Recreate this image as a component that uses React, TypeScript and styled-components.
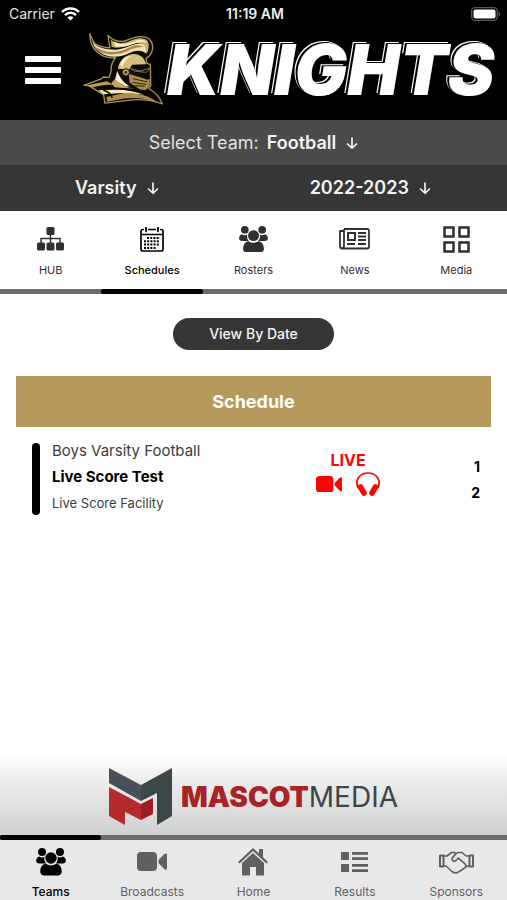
import React from "react";
import styled, { createGlobalStyle } from "styled-components";

const GlobalStyle = createGlobalStyle`
  * { box-sizing: border-box; }
  body { margin: 0; background: #fff; font-family: Inter, "Liberation Sans", sans-serif; }
  button, select { font-family: inherit; }
`;

const Page = styled.div`
  display: flex;
  flex-direction: column;
  min-height: 100vh;
  background: #fff;
`;

const Header = styled.header`
  background: #000;
  color: #fff;
`;

const StatusBar = styled.div`
  display: grid;
  grid-template-columns: 1fr auto 1fr;
  align-items: center;
  height: 28px;
  padding: 0 6px 0 9px;
  font-size: 14px;
  line-height: 16px;
`;

const Carrier = styled.span`
  display: flex;
  align-items: center;
  gap: 6px;
  color: #e4e4e4;
`;

const Clock = styled.span`
  font-weight: 600;
  font-size: 14px;
  color: #eee;
`;

const BatterySlot = styled.span`
  display: flex;
  justify-content: flex-end;
`;

const BrandRow = styled.div`
  display: flex;
  align-items: center;
  height: 92px;
  padding: 0 8px 8px 25px;
`;

const MenuButton = styled.button`
  display: flex;
  flex: none;
  flex-direction: column;
  gap: 5px;
  width: 36px;
  padding: 0;
  border: 0;
  background: none;
  cursor: pointer;
`;

const MenuLine = styled.span`
  height: 6px;
  border-radius: 1px;
  background: #fff;
`;

const Brand = styled.h1`
  display: flex;
  align-items: center;
  flex: 1;
  margin: 0 0 0 22px;
`;

const Wordmark = styled.span`
  margin-left: 3px;
  font-family: Inter, "Liberation Sans", sans-serif;
  font-size: 70px;
  line-height: 76px;
  font-weight: 900;
  font-style: italic;
  color: #fff;
  text-shadow: -2px -1px 0 #000, -3px -2px 0 #fff;
`;

const PickerBar = styled.div<{ $tone: string; $columns: number }>`
  display: grid;
  grid-template-columns: repeat(${(p) => p.$columns}, 1fr);
  align-items: center;
  height: ${(p) => (p.$columns === 1 ? 45 : 46)}px;
  background: ${(p) => p.$tone};
  color: #f2f2f2;
`;

const Picker = styled.label<{ $inset?: boolean }>`
  display: flex;
  align-items: center;
  justify-content: center;
  padding-right: ${(p) => (p.$inset ? 20 : 0)}px;
  font-size: 18px;
  line-height: 24px;
`;

const PickerPrefix = styled.span`
  margin-right: 8px;
  color: #e0e0e0;
`;

const PickerSelect = styled.select`
  appearance: none;
  field-sizing: content;
  margin: 0 10px 0 0;
  padding: 0;
  border: 0;
  background: none;
  color: inherit;
  font-size: 18px;
  line-height: 24px;
  font-weight: 600;
  cursor: pointer;

  option { color: #222; }
`;

const TabBar = styled.nav`
  display: grid;
  grid-template-columns: repeat(5, 1fr);
  height: 78px;
`;

const FootBar = styled(TabBar)`
  height: 60px;
  background: #e8e8e8;
`;

const TabLink = styled.a<{ $active?: boolean; $footer?: boolean }>`
  display: flex;
  flex-direction: column;
  align-items: center;
  justify-content: flex-end;
  gap: ${(p) => (p.$footer ? 6 : 7)}px;
  padding-bottom: ${(p) => (p.$footer ? 0 : 11)}px;
  color: ${(p) => (p.$active ? "#000" : p.$footer ? "#606060" : "#303030")};
  font-size: ${(p) => (p.$footer ? 12 : 11)}px;
  line-height: 16px;
  font-weight: ${(p) => (p.$active ? 500 : 400)};
  text-decoration: none;
`;

const IconSlot = styled.span`
  display: flex;
  align-items: center;
  justify-content: center;
  height: 32px;
`;

const Track = styled.div`
  display: grid;
  grid-template-columns: repeat(5, 1fr);
  height: 5px;
  background: #6b6b6b;
`;

const Marker = styled.div<{ $column: number }>`
  grid-column: ${(p) => p.$column};
  border-radius: 3px;
  background: #000;
`;

const Content = styled.main`
  display: flex;
  flex: 1;
  flex-direction: column;
  padding: 24px 16px;
`;

const DateButton = styled.button`
  align-self: center;
  padding: 8px 36px;
  border: 0;
  border-radius: 16px;
  background: #363636;
  color: #f4f4f4;
  font-size: 14px;
  line-height: 16px;
  font-weight: 500;
  cursor: pointer;
`;

const SectionTitle = styled.h2`
  margin: 26px 0 0;
  padding: 14px 0 13px;
  background: #b5995a;
  color: #fff;
  font-size: 18px;
  line-height: 24px;
  font-weight: 700;
  text-align: center;
`;

const GameRow = styled.article`
  display: grid;
  grid-template-columns: 8px 1fr 80px 92px;
  margin-top: 16px;
  padding: 0 11px 0 16px;
`;

const Accent = styled.span`
  height: 72px;
  border-radius: 4px;
  background: #000;
`;

const GameText = styled.div`
  display: flex;
  flex-direction: column;
  gap: 2px;
  padding-left: 12px;
  color: #3c3c3c;
`;

const GameLine = styled.p<{ $small?: boolean }>`
  margin: 0;
  font-size: ${(p) => (p.$small ? 13 : 15)}px;
  line-height: ${(p) => (p.$small ? 24 : 16)}px;
`;

const GameName = styled.h3`
  margin: 0;
  padding: 4px 0 0;
  color: #000;
  font-size: 15px;
  line-height: 24px;
  font-weight: 700;
`;

const LiveBlock = styled.div`
  display: flex;
  flex-direction: column;
  align-items: center;
  padding-top: 7px;
  color: #ff0404;
  font-size: 16px;
  line-height: 20px;
  font-weight: 700;
`;

const LiveLinks = styled.div`
  display: flex;
  align-items: center;
  gap: 14px;
  margin-top: 2px;
`;

const LiveLink = styled.a`
  display: flex;
  color: inherit;
`;

const Scores = styled.div`
  display: flex;
  flex-direction: column;
  gap: 2px;
  padding-top: 12px;
  text-align: right;
  color: #000;
  font-size: 14px;
  line-height: 24px;
  font-weight: 700;
`;

const SponsorBanner = styled.a`
  display: flex;
  align-items: center;
  justify-content: center;
  gap: 8px;
  height: 80px;
  padding-top: 3px;
  background: linear-gradient(#fff, #f0f0f0 25%, #cfd0d1);
  text-decoration: none;
`;

const SponsorName = styled.span`
  color: #3d4647;
  font-size: 28px;
  line-height: 32px;
  font-weight: 400;
`;

const SponsorStrong = styled.strong`
  color: #a82226;
  font-weight: 900;
`;

const ArrowDown = () => (
  <svg width="12" height="14" viewBox="0 0 12 14" fill="none" stroke="currentColor" strokeWidth="1.7" strokeLinecap="round" strokeLinejoin="round" aria-hidden="true">
    <path d="M6 2v10M1.500 8 6 12.200 10.500 8" />
  </svg>
);

const Wifi = () => (
  <svg width="19" height="14" viewBox="0 0 19 14" fill="none" stroke="#fff" strokeWidth="2.500" aria-hidden="true">
    <path d="M1 5C5.700.2 13.300.2 18 5" />
    <path d="M4 8.200c3.200-3.200 7.800-3.200 11 0" />
    <path d="M9.500 13.500 6.500 10.400c1.800-1.600 4.200-1.600 6 0z" fill="#fff" stroke="none" />
  </svg>
);

const Battery = () => (
  <svg width="30" height="14" viewBox="0 0 30 14" aria-hidden="true">
    <rect x=".7" y=".7" width="25.600" height="12.600" rx="3.500" fill="none" stroke="#5b5b5b" strokeWidth="1.300" />
    <rect x="2.500" y="2.500" width="22" height="9" rx="2" fill="#fff" />
    <path d="M27.600 4.500c2 .8 2 4.200 0 5z" fill="#5b5b5b" />
  </svg>
);

const Knight = () => (
  <svg width="81" height="74" viewBox="8 12 244 222" role="img" aria-label="Knight">
    <g strokeLinejoin="round">
      <path d="M29 17 42 42c12 10 29 14 47 14L83 19c18 18 39 22 60 13 28-11 58-14 70 5 11 18 2 42-15 51l2 14 11 5 1 64-7 7c22 12 35 28 42 47-29-10-57-15-90-12l-83 10-4-26-45-27-14-1 53-20 5-5 18 1 6-21c-2-17 4-27 13-38-43 4-80-24-77-75z" fill="#0c0a06" stroke="#a99359" strokeWidth="4" />
      <path d="M35 35c10 21 44 27 72 27 29-2 57-23 84-19 15 3 18 21 7 30-15-12-34-9-48-2-43 22-101 15-115-36z" fill="#f1dfb2" />
      <path d="M40 50c32 22 69 26 105 6 15-8 31-11 45-2-20-2-37 6-50 13-41 17-87 9-100-17z" fill="#a78850" />
      <path d="M92 32c19 15 42 11 64 1 20-8 42-8 48 6 6 14-1 27-8 35 6-24-9-38-31-32-24 11-52 18-71 11z" fill="#c8ad71" />
      <path d="M101 37c23 14 44 7 68-3 13-5 26-2 31 7-28-10-48 16-95 11z" fill="#fbefc8" />
      <path d="M113 119c4-25 22-42 46-44 20-1 36 12 39 31l-42 1-9 15z" fill="#d6bd80" />
      <path d="M120 106c7-17 19-25 37-26-19 8-26 18-30 36z" fill="#fff0c5" />
      <path d="m152 119 28 7 29-8-10 12-35-3z" fill="#050505" stroke="#c3a769" strokeWidth="2" />
      <path d="m146 134 57 18 6-2v20l-12 13-17-1-32-21z" fill="#ad8d4e" />
      <path d="m158 149 44 10M157 160l42 7M165 170l29 2" stroke="#292112" strokeWidth="3" />
      <circle cx="137" cy="130" r="11" fill="#b79b61" stroke="#1c160a" strokeWidth="3" />
      <circle cx="137" cy="130" r="4" fill="#3a2d17" />
      <path d="M111 126c9 22 20 36 38 46l-12 1-33-18z" fill="#fff2cf" />
      <path d="M104 150c17 18 34 25 58 29l-58-3-11-13z" fill="#c2a364" />
      <path d="m18 170 62-13 20 11c-22-3-46 2-64 8z" fill="#bd9d5e" />
      <path d="M54 184c37 0 68-4 98 2l42 11-69-5-55 4z" fill="#f8e5b7" />
      <path d="m78 204 54-12c44 0 76 7 105 32-34-16-68-19-105-15l-51 10z" fill="#ad8e50" />
      <path d="M69 184c15 4 24 11 27 23M50 176c39-4 79 6 121 10l61 27" fill="none" stroke="#090704" strokeWidth="4" />
    </g>
  </svg>
);

const Sitemap = () => (
  <svg width="27" height="24" viewBox="0 0 27 24" fill="currentColor" aria-hidden="true">
    <rect x="9.500" y="0" width="8" height="8" rx="1.500" />
    <rect x="0" y="15.500" width="8" height="8" rx="1.500" />
    <rect x="9.500" y="15.500" width="8" height="8" rx="1.500" />
    <rect x="19" y="15.500" width="8" height="8" rx="1.500" />
    <path d="M13.500 7v9M4 16v-4.500h19V16" fill="none" stroke="currentColor" strokeWidth="1.500" />
  </svg>
);

const People = ({ size = 30 }: { size?: number }) => (
  <svg width={size} height={size * 0.93} viewBox="0 0 30 28" fill="currentColor" aria-hidden="true">
    <circle cx="6" cy="4" r="4" />
    <circle cx="24" cy="4" r="4" />
    <path d="M3 8.500c2 1.300 4 1.300 5.500.3-.7 3 .1 5 1.800 6.700H3.500C.7 15.500-.4 14 .2 11.800.7 10 1.500 9 3 8.500zM27 8.500c-2 1.300-4 1.300-5.500.3.7 3-.1 5-1.800 6.700h6.800c2.800 0 3.900-1.500 3.300-3.700-.5-1.800-1.300-2.800-2.800-3.300z" />
    <circle cx="15" cy="10" r="5.700" />
    <path d="M10 15.800c3 2.200 7 2.200 10 0 4 .6 5.500 3.200 5.800 7.500.1 2.500-1.500 4.200-4 4.200H8.200c-2.500 0-4.100-1.700-4-4.200.3-4.300 1.800-6.900 5.800-7.500z" />
  </svg>
);

const Calendar = () => (
  <svg width="24" height="25" viewBox="0 0 24 25" fill="none" stroke="currentColor" aria-hidden="true">
    <path d="M4 2.500H3a2 2 0 0 0-2 2V22a2 2 0 0 0 2 2h18a2 2 0 0 0 2-2V4.500a2 2 0 0 0-2-2h-1M8 2.500h8M1 7.500h22" strokeWidth="1.700" />
    <path d="M6 .5v4M18 .5v4" strokeWidth="1.700" strokeLinecap="round" />
    <path d="M7 11h13M4 14.300h16M4 17.600h16M4 20.900h12" strokeWidth="2" strokeDasharray="2 1.200" />
  </svg>
);

const Newspaper = () => (
  <svg width="31" height="22" viewBox="0 0 31 22" fill="none" stroke="currentColor" aria-hidden="true">
    <path d="M5 1h23a2 2 0 0 1 2 2v15.500a2 2 0 0 1-2 2H3a2 2 0 0 1-2-2V3h4M5 1v17a2 2 0 0 1-3.500 1.500" strokeWidth="1.800" strokeLinejoin="round" />
    <rect x="9" y="5" width="7" height="7" strokeWidth="2" />
    <path d="M19 5h8M19 8.500h8M19 12h8M8 16h8M19 16h8" strokeWidth="1.800" />
  </svg>
);

const MediaGrid = () => (
  <svg width="27" height="27" viewBox="0 0 27 27" fill="none" stroke="currentColor" strokeWidth="2.500" aria-hidden="true">
    <rect x="1.500" y="1.500" width="9" height="9" />
    <rect x="16.500" y="1.500" width="9" height="9" />
    <rect x="1.500" y="16.500" width="9" height="9" />
    <rect x="16.500" y="16.500" width="9" height="9" />
  </svg>
);

const VideoCamera = ({ width }: { width: number }) => (
  <svg width={width} height={width * 0.64} viewBox="0 0 30 19" fill="currentColor" aria-hidden="true">
    <rect width="20" height="19" rx="4" />
    <path d="m21.500 8 5.800-6c1-1 2.700-.8 2.700.7v13.600c0 1.500-1.700 1.700-2.700.7l-5.800-6z" />
  </svg>
);

const Headphones = () => (
  <svg width="24" height="24" viewBox="0 0 24 24" aria-hidden="true">
    <path d="M3 17C-2.500 9 3.500 1 12 1s14.500 8 9 16" fill="none" stroke="currentColor" strokeWidth="1.700" />
    <path d="m4.500 15 3.500 6M19.500 15 16 21" stroke="currentColor" strokeWidth="5.500" strokeLinecap="round" />
  </svg>
);

const House = () => (
  <svg width="30" height="28" viewBox="0 0 30 28" fill="currentColor" aria-hidden="true">
    <path d="M15 0 0 14 1.500 15.500 15 3l13.500 12.500L30 14l-5-4.700V1h-4v4.500z" />
    <path d="M15 5 4 15v11.500a1 1 0 0 0 1 1h7V19h6v8.500h7a1 1 0 0 0 1-1V15z" />
  </svg>
);

const ResultsList = () => (
  <svg width="27" height="20" viewBox="0 0 27 20" fill="currentColor" aria-hidden="true">
    <path d="M0 0h8v8H0zM0 12h8v8H0zM11 0h16v2.700H11zM11 5.300h16V8H11zM11 12h16v2.700H11zM11 17.300h16V20H11z" />
  </svg>
);

const Handshake = () => (
  <svg width="35" height="23" viewBox="0 0 35 23" fill="none" stroke="currentColor" strokeWidth="1.600" strokeLinejoin="round" strokeLinecap="round" aria-hidden="true">
    <path d="M1 4.500h3.500v11H1zM30.500 4.500H34v11h-3.500z" strokeWidth="2" />
    <path d="M5 5h3l4.500-3.500h3L17 2.600M5 15h2l6 5.500c2 1.500 4.500 1.700 6.500.5l7-4.500L28 15h2M30 5h-3l-4-3.500h-3.500L17 2.600l-3.500 4c-1.500 2.200.8 4.400 3 3.200l3-2.600 6.500 5.600c1.200 1.200 1 2.700.3 3.700" />
  </svg>
);

const SponsorLogo = () => (
  <svg width="64" height="58" viewBox="0 0 64 58" aria-hidden="true">
    <path d="m0 0 32 17v16L0 15z" fill="#48515a" />
    <path d="m32 17 31-17v48l-15 9V25L32 33z" fill="#3c4747" />
    <path d="m0 19 32 17v16l-16-8v13L0 48z" fill="#b6292c" />
    <path d="m32 36 12-6v16l-12 6z" fill="#9c1e23" />
  </svg>
);

const sectionTabs = [
  { label: "HUB", icon: <Sitemap /> },
  { label: "Schedules", icon: <Calendar />, active: true },
  { label: "Rosters", icon: <People size={29} /> },
  { label: "News", icon: <Newspaper /> },
  { label: "Media", icon: <MediaGrid /> },
];

const footerTabs = [
  { label: "Teams", icon: <People />, active: true },
  { label: "Broadcasts", icon: <VideoCamera width={30} /> },
  { label: "Home", icon: <House /> },
  { label: "Results", icon: <ResultsList /> },
  { label: "Sponsors", icon: <Handshake /> },
];

export default function App() {
  return (
    <Page>
      <GlobalStyle />
      <Header>
        <StatusBar>
          <Carrier>Carrier <Wifi /></Carrier>
          <Clock>11:19 AM</Clock>
          <BatterySlot><Battery /></BatterySlot>
        </StatusBar>
        <BrandRow>
          <MenuButton aria-label="Menu">
            <MenuLine /><MenuLine /><MenuLine />
          </MenuButton>
          <Brand>
            <Knight />
            <Wordmark>KNIGHTS</Wordmark>
          </Brand>
        </BrandRow>
      </Header>

      <PickerBar $tone="#4a4a4a" $columns={1}>
        <Picker>
          <PickerPrefix>Select Team:</PickerPrefix>
          <PickerSelect defaultValue="Football"><option>Football</option></PickerSelect>
          <ArrowDown />
        </Picker>
      </PickerBar>
      <PickerBar $tone="#363636" $columns={2}>
        <Picker $inset>
          <PickerSelect aria-label="Level" defaultValue="Varsity"><option>Varsity</option></PickerSelect>
          <ArrowDown />
        </Picker>
        <Picker $inset>
          <PickerSelect aria-label="Season" defaultValue="2022-2023"><option>2022-2023</option></PickerSelect>
          <ArrowDown />
        </Picker>
      </PickerBar>

      <TabBar aria-label="Team sections">
        {sectionTabs.map((tab) => (
          <TabLink key={tab.label} href="#" $active={tab.active}>
            <IconSlot>{tab.icon}</IconSlot>
            {tab.label}
          </TabLink>
        ))}
      </TabBar>
      <Track><Marker $column={2} /></Track>

      <Content>
        <DateButton>View By Date</DateButton>
        <SectionTitle>Schedule</SectionTitle>
        <GameRow>
          <Accent />
          <GameText>
            <GameLine>Boys Varsity Football</GameLine>
            <GameName>Live Score Test</GameName>
            <GameLine $small>Live Score Facility</GameLine>
          </GameText>
          <LiveBlock>
            LIVE
            <LiveLinks>
              <LiveLink href="#" aria-label="Watch"><VideoCamera width={26} /></LiveLink>
              <LiveLink href="#" aria-label="Listen"><Headphones /></LiveLink>
            </LiveLinks>
          </LiveBlock>
          <Scores><span>1</span><span>2</span></Scores>
        </GameRow>
      </Content>

      <SponsorBanner href="#">
        <SponsorLogo />
        <SponsorName><SponsorStrong>MASCOT</SponsorStrong>MEDIA</SponsorName>
      </SponsorBanner>
      <Track><Marker $column={1} /></Track>
      <FootBar aria-label="Main">
        {footerTabs.map((tab) => (
          <TabLink key={tab.label} href="#" $active={tab.active} $footer>
            <IconSlot>{tab.icon}</IconSlot>
            {tab.label}
          </TabLink>
        ))}
      </FootBar>
    </Page>
  );
}
